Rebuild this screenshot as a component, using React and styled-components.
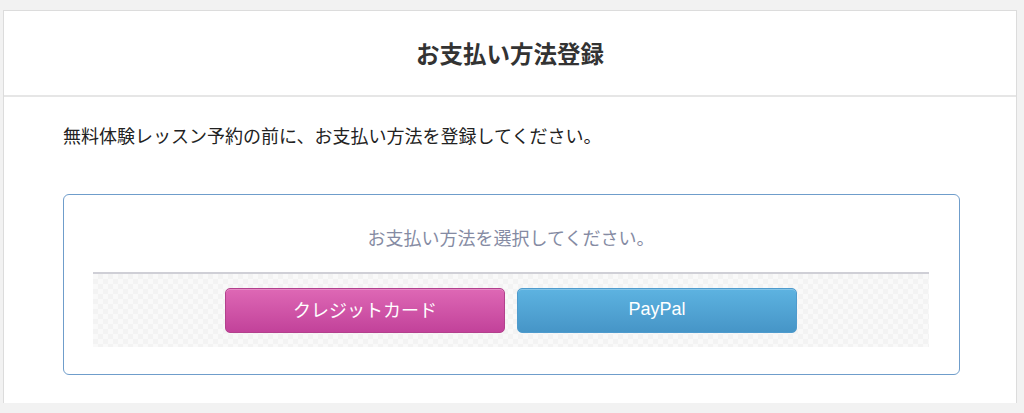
import React from "react";
import styled, { createGlobalStyle } from "styled-components";

const Global = createGlobalStyle`
  html, body { margin: 0; padding: 0; background: #f2f2f2; }
  body { font-family: "Noto Sans CJK JP", "Noto Sans", sans-serif; color: #333; }
`;

const Page = styled.div`
  padding: 10px 0 0 3px;
  height: 403px;
  box-sizing: border-box;
`;

const Panel = styled.section`
  width: 1014px;
  height: 396px;
  box-sizing: border-box;
  background: #fff;
  border: 1px solid #dcdcdc;
`;

const Header = styled.header`
  height: 86px;
  box-sizing: border-box;
  border-bottom: 2px solid #e6e6e6;
  display: flex;
  align-items: center;
  justify-content: center;
`;

const Title = styled.h1`
  margin: 0;
  font-size: 23.5px;
  font-weight: 700;
  color: #333;
  line-height: 1;
  padding-top: 2px;
`;

const Body = styled.div`
  padding: 25px 0 0 59px;
`;

const Lead = styled.p`
  margin: 0;
  font-size: 18px;
  line-height: 26px;
  color: #222;
`;

const Card = styled.div`
  margin-top: 46px;
  width: 897px;
  height: 181px;
  box-sizing: border-box;
  border: 1.5px solid #6f9dcb;
  border-radius: 6px;
  padding: 29px 30px 0 29px;
`;

const CardTitle = styled.p`
  margin: 0;
  text-align: center;
  font-size: 18px;
  line-height: 26px;
  color: #858ba3;
`;

const Choices = styled.div`
  margin-top: 22px;
  border-top: 2px solid #cfcfd6;
  height: 75px;
  box-sizing: border-box;
  display: flex;
  justify-content: center;
  align-items: center;
  gap: 12px;
  padding-bottom: 1px;
  background-color: #f9f9f9;
  background-image:
    linear-gradient(45deg, #f3f3f3 25%, transparent 25%, transparent 75%, #f3f3f3 75%),
    linear-gradient(45deg, #f3f3f3 25%, transparent 25%, transparent 75%, #f3f3f3 75%);
  background-size: 10px 10px;
  background-position: 0 0, 5px 5px;
`;

const PayButton = styled.button`
  width: 280px;
  height: 45px;
  box-sizing: border-box;
  border-radius: 5px;
  border: 1px solid ${(p) => p.$border};
  background: linear-gradient(to bottom, ${(p) => p.$top}, ${(p) => p.$bottom});
  box-shadow: inset 0 1px 0 rgba(255, 255, 255, 0.25);
  color: #fff;
  font-family: ${(p) => (p.$latin ? '"Liberation Sans", "Noto Sans", sans-serif' : '"Noto Sans CJK JP", sans-serif')};
  font-size: 18px;
  line-height: 1;
  cursor: pointer;
  padding: 0 0 2px;
`;

export default function App() {
  return (
    <>
      <Global />
      <Page>
        <Panel>
          <Header>
            <Title>お支払い方法登録</Title>
          </Header>
          <Body>
            <Lead>無料体験レッスン予約の前に、お支払い方法を登録してください。</Lead>
            <Card>
              <CardTitle>お支払い方法を選択してください。</CardTitle>
              <Choices>
                <PayButton $top="#de68b5" $bottom="#c2429a" $border="#b3418d">
                  クレジットカード
                </PayButton>
                <PayButton $latin $top="#5db3e1" $bottom="#4695c7" $border="#4f9bcd">
                  PayPal
                </PayButton>
              </Choices>
            </Card>
          </Body>
        </Panel>
      </Page>
    </>
  );
}
